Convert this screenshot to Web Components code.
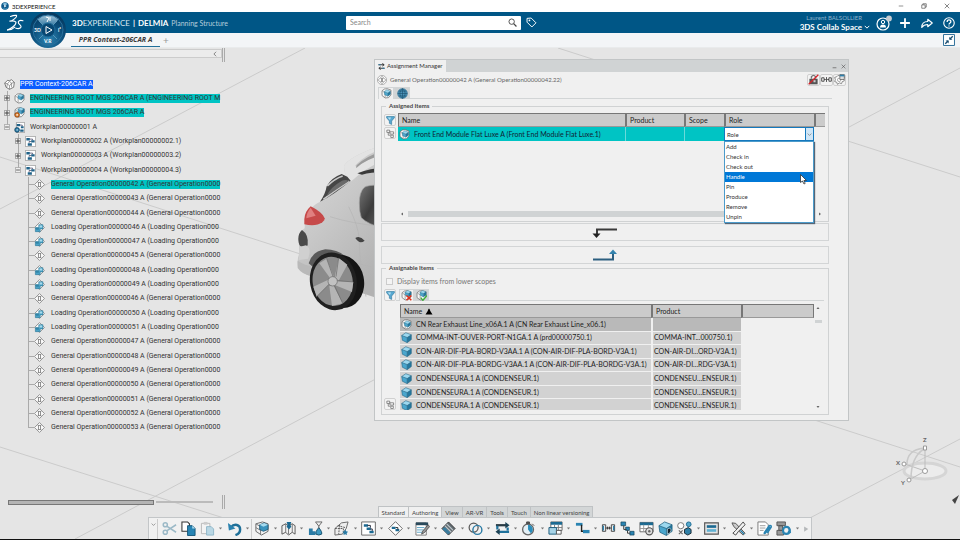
<!DOCTYPE html>
<html lang="en">
<head>
<meta charset="utf-8">
<title>3DEXPERIENCE</title>
<style>
html,body{margin:0;height:100%}
body{font:7px/9px Lato,"Open Sans",sans-serif;color:#2a2a2a;background:#e5e5e5}
</style>
</head>
<body>
<app-shell></app-shell>
<script>
const define=(name,html,setup)=>customElements.define(name,class extends HTMLElement{
  connectedCallback(){
    if(this.shadowRoot)return;
    const t=document.createElement('template');
    t.innerHTML='<style>*{box-sizing:border-box}button,input,select{font:inherit;color:inherit;margin:0;padding:0;border:0;background:none;border-radius:0}button{display:flex;align-items:center;justify-content:center}</style>'+(typeof html==='function'?html(this):html);
    this.attachShadow({mode:'open'}).append(t.content.cloneNode(true));
    if(setup)setup(this);
  }
});

/* ---------- icons, all on a 16 unit grid ---------- */
const cube=(x,y,s)=>`<g transform="translate(${x} ${y}) scale(${s})"><path d="M1 5 7 1l8 3-6 4z" fill="#9cd8ef"/><path d="M1 5l8 3v7.500L2 12z" fill="#4aa6cd"/><path d="M15 4 9 8v7.500l6-4.500z" fill="#24789f"/><path d="M1 5 7 1l8 3v7l-6 4.500L2 12zM1 5l8 3 6-4M9 8v7" fill="none" stroke="#1d5f7e" stroke-width=".8"/></g>`;
const product=`<path d="M5 1.500 1.500 4v7L6 14.500l5-.5 3.500-4V3L9 1z" fill="#f8f8f8" stroke="#666"/><path d="M2 4.500 6 7v7" fill="none" stroke="#888"/>`;
const ICONS={
part:cube(0,0,1),
product:product+cube(4,2,.65),
root:product+cube(5,1,.6)+'<path d="M2 2l2 2" stroke="#fff"/>',
mfg:product+cube(5,0,.66)+'<circle cx="4.500" cy="11.500" r="3.500" fill="#d97a2a" stroke="#7a3305"/><circle cx="4.500" cy="11.500" r="1.200" fill="#fff"/>',
ppr:'<path d="M5 2 1 6l2 6 5 3 6-3 1-7-4-4-3 1.500z" fill="#fff" stroke="#555" stroke-width="1.100"/><path d="M1 6l4 1 3-3.500L11 6l4-1M5 7l-1 5M11 6v6M5 7l3 3 3-4M8 10v5" fill="none" stroke="#777"/>',
wplan:'<path d="M.500.500h15v15H.500z" fill="#fff" stroke="#888"/><path d="M2 3h5v3.500H2zM9 6h5v3.500H9zM4 10.500h6V14H4z" fill="#1f6288"/><path d="M7 4.500h4V6M9 8H6v2" fill="none" stroke="#335"/>',
wplang:'<path d="M3.500.500h12v15h-12z" fill="#fff" stroke="#888"/><path d="M4 3h5v3H4zM10 6h4v3h-4zM9 11h5v3H9z" fill="#1f6288"/><path d="M9 4.500h3V6" fill="none" stroke="#335"/><circle cx="4.500" cy="11.500" r="3.500" fill="#2a7aa5" stroke="#093a57"/><circle cx="4.500" cy="11.500" r="1" fill="#fff"/>',
op:'<path d="M8 .800 15.200 8 8 15.200.800 8z" fill="#fcfcfc" stroke="#8a8a8a" stroke-width="1.300"/><path d="M5.500 5h5M5.500 11h5M6.500 5v6M9.500 5v6" fill="none" stroke="#777" stroke-width="1.200"/>',
load:'<path d="M8 .800 15.200 8 8 15.200.800 8z" fill="#fcfcfc" stroke="#8a8a8a" stroke-width="1.300"/><path d="M7 4h6v6H9v4H2V8h5z" fill="#4ba3c7" stroke="#23708f" stroke-width=".8"/><path d="M8 5h4v3H8z" fill="#a9dbec"/><path d="M3 9h4v2H3z" fill="#2b7d9f"/>',
opr:'<circle cx="8" cy="8" r="7.300" fill="#fff" stroke="#888"/><path d="M8 2l6 6-6 6-6-6z" fill="none" stroke="#777"/><path d="M6 5.500h4M6 10.500h4M6.500 6l3 4M9.500 6l-3 4" stroke="#555"/>',
plus:'<path d="M1 1h14v14H1z" fill="#eee" stroke="#888" stroke-width="2"/><path d="M8 2v12M2 8h12" stroke="#333" stroke-width="2.400"/>',
minus:'<path d="M1 1h14v14H1z" fill="#eee" stroke="#999" stroke-width="2"/><path d="M3 8h10" stroke="#555" stroke-width="2.400"/>',
filter:'<path d="M1 1h14v2l-5 6v6l-4-2V9L1 3z" fill="#58a9d2" stroke="#246c94"/><path d="M3 2.500h6L7 7z" fill="#b7e0f2"/>',
tree:'<path d="M1.500 2h5v4h-5zM7 5h6.500v4H7zM8.500 11H13v4H8.500zM4 6v5h3.500" fill="#fff" stroke="#666" stroke-width="1.300"/>',
globe:'<circle cx="8" cy="8" r="7" fill="#4b93b8" stroke="#24668a"/><path d="M1 8h14M8 1v14M2.500 4.500h11M2.500 11.500h11M8 1C3 5 3 11 8 15c5-4 5-10 0-14" fill="none" stroke="#1c516f" stroke-width=".9"/>',
compare:'<path d="M1 4h13M10 1l4 3-4 3M15 12H2M6 9l-4 3 4 3" fill="none" stroke="#333" stroke-width="2.200"/><path d="M1 4h5M15 12h-5" stroke="#2d7ea9" stroke-width="2.200"/>',
hidex:product+cube(5,0,.65)+'<path d="M8 8l7 7M15 8l-7 7" stroke="#e0301a" stroke-width="2.200"/>',
okx:product+cube(5,0,.65)+'<path d="M7 11l3 4 6-7" fill="none" stroke="#3fae3a" stroke-width="2"/>',
lock:'<path d="M2 7h12v8H2z" fill="#555"/><path d="M5 7V4q3-4 6 0v3" fill="none" stroke="#777" stroke-width="2"/><path d="M1 15 15 1" stroke="#d8232a" stroke-width="1.800"/><path d="M8 9h3v3H8z" fill="#ccc"/>',
nodes:'<path d="M1 5.500h3.500v5H1zM11.500 5.500H15v5h-3.500z" fill="none" stroke="#333" stroke-width="1.200"/><path d="M8 4.500v7M4.500 8H7M9 8h2.500" stroke="#333" stroke-width="1.200"/>',
gearw:'<path d="M6 2l2 1 2-2 2 2 3 1-1 3 1 3-3 1-1 3-3-1-3 2-1-3-3-1 1-3-1-3 3-1z" fill="#fff" stroke="#777" stroke-width="1.200"/><circle cx="7.500" cy="8.500" r="2.500" fill="none" stroke="#888"/><path d="M8.500 1H15v7H8.500z" fill="#ddd" stroke="#555"/><path d="M8.500 1H15v2.500H8.500z" fill="#2d7ea9"/>',
cut:'<g fill="none" stroke="#9bb9c7" stroke-width="1.600"><circle cx="3.500" cy="4" r="2.200"/><circle cx="3.500" cy="12" r="2.200"/><path d="M5 5.500 15 12M5 10.500 15 4"/></g>',
copy:'<path d="M1 1h6l2 2v8H1z" fill="#fff" stroke="#333" stroke-width="1.100"/><path d="M7 5h5l3 3v7.500H7z" fill="#2784b4" stroke="#14567a"/><path d="M12 5v3h3" fill="#b4deef"/>',
paste:'<path d="M1.500 2.500h9v11h-9z" fill="#f3f3f3" stroke="#b8b8b8"/><path d="M4 1h4v3H4z" fill="#ccc"/><path d="M7 6h5l2.500 2.500V15H7z" fill="#b9d7e4" stroke="#8fb6c9"/>',
undo:'<path d="M4 7C8 2 14 4 14 9c0 3-2 5-5 6" fill="none" stroke="#1f7099" stroke-width="2.600"/><path d="M1 2l1 8 7-2z" fill="#2a82af"/>',
box:'<path d="M2 3 9 1l6 2v8l-7 4-6-4z" fill="#f2f2f2" stroke="#666"/><path d="M2 3l5 3v9M2 7l5 3" fill="none" stroke="#777"/><path d="M6 4l5-2 4 2v5l-5 2-4-2z" fill="#3a93bd" stroke="#15506d" stroke-width=".8"/><path d="M6 4l4 2 5-2-4-2z" fill="#a5daee"/>',
map:'<path d="M1 5l4-2 3 2 4-2 3 2v9l-3-2-4 3-3-3-4 2z" fill="#f2f2f2" stroke="#555"/><path d="M5 3v9M8 6v8M12 3v9" stroke="#777"/><path d="M6 1h5l-1 3 1 2-2.500 3L6 6l1-2z" fill="#1c6a92"/>',
res:'<path d="M1 8h4v7H1zM5 11h3v4H5z" fill="#2a7ba5"/><path d="M11.500 7q4 5 3 7-3 2-6 0-1-2 3-7z" fill="#3f9ac2" stroke="#15506d"/><path d="M8 1h7l-3.500 4.500zM11.500 5v3" fill="#eee" stroke="#666"/>',
zone:'<path d="M1 8 8 2l7-1-2 7-4 6-8 1z" fill="#eee" stroke="#666"/><path d="M4 5l8 2M1 8h9v6M6 4l-1 10" stroke="#555" fill="none" stroke-dasharray="2 1"/><path d="M12 9l1 2 2 .5-1.500 1.500.5 2-2-1-2 1 .5-2L9 11.500l2-.5z" fill="#2a7ba5"/>',
wbox:'<path d="M.700 1h14.600v14H.700z" fill="#fff" stroke="#666"/><path d="M3 3.500h4.500v2.500H3zM6 7h4.500v2.500H6zM9 10.500h4.500v2.500H9z" fill="#1c6a92"/><path d="M7 4.700h3V7M10 8.500h2v2" fill="none" stroke="#223"/>',
diam:'<path d="M8 .700 15.300 8 8 15.300.700 8z" fill="#fff" stroke="#666"/><path d="M4 6h4v2.500H4zM8 8.500h4v2.500H8z" fill="#1c6a92"/><path d="M8 7h2.500v2" stroke="#222" fill="none"/>',
note:'<path d="M1 2h11v13H1z" fill="#fff" stroke="#777"/><path d="M1 1.500h13v3H1z" fill="#2a4a5c"/><path d="M2 7h8M2 9.500h7M2 12h6" stroke="#5aa3c4"/><path d="M14 4 8 11l-1 3 3-1.500L15.500 6z" fill="#999" stroke="#333" stroke-width=".7"/>',
diab:'<path d="M8 1l7 7-7 7-7-7z" fill="#616c72" stroke="#333"/><path d="M4 5l7 7M6 3l7 7" stroke="#c0c8cc" stroke-width="1.300"/><path d="M2 8l6 6M3.500 7l6 6" stroke="#2d84b0" stroke-width="1.200"/>',
rings:'<circle cx="6" cy="7" r="4.800" fill="none" stroke="#555" stroke-width="1.300"/><circle cx="10" cy="9.500" r="4.800" fill="none" stroke="#2a7ba5" stroke-width="1.500"/>',
swap:'<path d="M1 4.500h11" fill="none" stroke="#2a3b44" stroke-width="2.400"/><path d="M15 11.500H4M13.500 10V7M2.500 5v4" fill="none" stroke="#20729c" stroke-width="2.400"/><path d="M11 1l4.500 3.500L11 8zM5 8l-4.500 3.500L5 15z" fill="#1d4254"/>',
clock:'<circle cx="7.500" cy="9" r="5.800" fill="#e3eff5" stroke="#666" stroke-width="1.400"/><path d="M7.500 9V4a5 5 0 0 1 3 9z" fill="#2a8dbb"/><path d="M6 1h3v2H6zM12 3l2 2" fill="#555" stroke="#444"/>',
tabl:'<path d="M3 1h12v9H3z" fill="#fff" stroke="#666"/><path d="M3 1h12v3H3z" fill="#1c6a92"/><path d="M7 4v6M11 4v6M3 7h12" stroke="#777"/><path d="M1 7h8v7H1z" fill="#a7d3e6" stroke="#1c5c7d"/><path d="M9 10h5v4h-5z" fill="#fff" stroke="#555"/>',
step:'<path d="M1 2h7v3H1z" fill="#2a84b2"/><path d="M7 4v7h3" fill="none" stroke="#222" stroke-width="1.500"/><path d="M8.500 9.500h7v3.500h-7z" fill="#2a84b2"/>',
link2:'<path d="M1.500 4h3.500v7H1.500zM11 4h3.500v7H11z" fill="#eee" stroke="#444"/><path d="M2.500 5v5M13.500 5v5" stroke="#2a84b2" stroke-width="1.400"/><path d="M5 7.500h6M7 6v3M9 6v3" stroke="#333"/>',
chain:'<path d="M1 1h5v4H1zM6 6.500h4v3.500H6zM10.500 11H15v4h-4.500z" fill="#2a84b2" stroke="#123f56" stroke-width=".7"/><path d="M4 5v4h3M8 10v3h3" fill="none" stroke="#333"/>',
gtab:'<path d="M1 1.500h14v10H1z" fill="#fff" stroke="#666"/><path d="M1 1.500h14v3H1z" fill="#1c6a92"/><path d="M5 4v7M10 4v7M1 8h14" stroke="#999"/><circle cx="11" cy="11" r="3.800" fill="#ddd" stroke="#555" stroke-width="1.200"/><circle cx="11" cy="11" r="1.300" fill="#666"/>',
dcube:cube(0,0,1)+'<path d="M10 8.500v5.500l3-1.500 1-3-1.500-2z" fill="#10202a" stroke="#cfe9f4" stroke-width=".7"/>',
shapes:'<circle cx="4" cy="5" r="3.300" fill="#fff" stroke="#777"/><circle cx="12.500" cy="3.500" r="2.500" fill="#57a9cc" stroke="#1c6a92"/><path d="M2 10l4 4M6 10l-4 4" stroke="#666" stroke-width="1.200"/><path d="M8 9l4-2 3 2v4l-3.500 2L8 13z" fill="#2f7fa6" stroke="#1b2a33"/>',
panel:'<path d="M.700 2h14.600v12H.700z" fill="#e4e4e4" stroke="#555" stroke-width="1.200"/><path d="M3 4.500h10v2.800H3z" fill="#1c6a92"/><path d="M3 8.700h10v2.800H3z" fill="#60b1d2"/>',
tools:'<path d="M1 2l4 .5L15 13l-2 2L3 6z" fill="#ccc" stroke="#555"/><path d="M13 1l2 3-7 7-3 4-3-2 3-3z" fill="#f2f2f2" stroke="#444"/><path d="M10 10l4 4" stroke="#1c7aa8" stroke-width="1.500"/>',
clip:'<path d="M1 1h8l3 3v11H1z" fill="#fff" stroke="#777"/><path d="M3 5h6M3 7.500h6M3 10h4" stroke="#999"/><path d="M14 6l-5 7q-2 1-1-1l5-7q3-1 2 2l-4 6" fill="none" stroke="#2a84b2" stroke-width="1.500"/>',
sync:'<path d="M1 1h9v4H1zM3 5h4v5H3zM1 10h7v5H1z" fill="#999" stroke="#555"/><path d="M7.500 10c0-5 7-5 7 0 0 5-7 5-7 0" fill="none" stroke="#2a84b2" stroke-width="2.200"/><path d="M12 12l3.500-4 .5 5z" fill="#2a84b2"/>',
dd:'<path d="M3 5h10l-5 6z" fill="#777"/>',
chev:'<path d="M2 5l6 6 6-6" fill="none" stroke="#777" stroke-width="2.200"/>',
chevw:'<path d="M2 5l6 6 6-6" fill="none" stroke="#fff" stroke-width="2.600"/>',
left:'<path d="M12 2 4 8l8 6z" fill="#666"/>',
right:'<path d="M4 2l8 6-8 6z" fill="#666"/>',
rlight:'<path d="M3 1l11 7-11 7z" fill="#b5b8ba"/>',
up:'<path d="M2 12 8 4l6 8z" fill="#666"/>',
down:'<path d="M2 4l6 8 6-8z" fill="#666"/>',
sort:'<path d="M0 15 5 7q3-12 6 0l5 8z" fill="#000"/>',
chevl:'<path d="M11 2 5 8l6 6" fill="none" stroke="#666" stroke-width="2"/>',
user:'<circle cx="7" cy="9" r="6" fill="none" stroke="#fff" stroke-width="1.200"/><circle cx="7" cy="7" r="1.700" fill="none" stroke="#fff"/><path d="M4 12.500q0-3 3-3t3 3z" fill="#fff"/><circle cx="13" cy="3.500" r="2.900" fill="#c6cdd2"/>',
add:'<path d="M8 1.500v13M1.500 8h13" stroke="#fff" stroke-width="2.400"/>',
share:'<path d="M9 3l6 5-6 5v-3C5 10 3 11 1 14 1 9 4 6 9 6z" fill="none" stroke="#fff" stroke-width="1.500" stroke-linejoin="round"/>',
help:'<circle cx="8" cy="8" r="7" fill="none" stroke="#fff" stroke-width="1.500"/><path d="M5.500 6.500C5.500 3 10.500 3 10.500 6.300 10.500 8 8 8 8 10M8 11.300v1.500" fill="none" stroke="#fff" stroke-width="1.700"/>',
mag:'<circle cx="6.500" cy="6.500" r="4.800" fill="none" stroke="#444" stroke-width="1.600"/><path d="M10 10l5 5" stroke="#444" stroke-width="2.200"/>',
tag:'<path d="M1.500 2v5.500l7 7 6-6-7-7z" fill="none" stroke="#fff" stroke-width="1.400"/><circle cx="5" cy="5" r="1.300" fill="#fff"/>',
shrink:'<path d="M.700.700h14.600v14.600H.700z" fill="#fff" stroke="#2d6e99" stroke-width="1.300"/><path d="M3 13l4-4M13 3 9 7" stroke="#174c70" stroke-width="1.800"/><path d="M3.500 8.500h4v4zM8.500 7.500v-4l4 4z" fill="#174c70"/>',
min:'<path d="M2 8h12" stroke="#333" stroke-width="1.400"/>',
minb:'<path d="M2 12h12" stroke="#777" stroke-width="3"/>',
rest:'<path d="M2 5h9v9H2zM5 5V2h9v9h-3" fill="none" stroke="#333" stroke-width="1.500"/>',
x:'<path d="M2 2l12 12M14 2 2 14" stroke="#444" stroke-width="1.700"/>',
logo3d:'<circle cx="8" cy="8" r="7.600" fill="#0f5a8c"/><path d="M3 4q5-4 10 0l-5 3z" fill="#8cc3e0"/><path d="M6.500 5.500 11 8l-4.500 3z" fill="#fff"/><path d="M3 12q5 4 10 0" stroke="#4a9cc6" stroke-width="1.500" fill="none"/>'
};
define('ds-icon',el=>`<style>:host{display:block;flex:none;width:11px;height:11px}svg{display:block;width:100%;height:100%}</style><svg viewBox="0 0 16 16" aria-hidden="true">${ICONS[el.getAttribute('name')]||''}</svg>`);

/* ---------- window title ---------- */
define('app-title',`<style>
:host{display:flex;align-items:center;height:12px;background:#fff;padding:0 10px 0 1px;flex:none;font-size:6px}
.name{margin-left:3px;flex:1;color:#111}
.win{display:flex;gap:17px}.win ds-icon{width:6px;height:6px}ds-icon{width:8px;height:8px}
</style><ds-icon name="logo3d"></ds-icon><span class="name">3DEXPERIENCE</span>
<div class="win"><button aria-label="Minimize"><ds-icon name="min"></ds-icon></button><button aria-label="Restore"><ds-icon name="rest"></ds-icon></button><button aria-label="Close"><ds-icon name="x"></ds-icon></button></div>`);

/* ---------- blue bar ---------- */
define('ds-logo',`<style>:host{display:block;width:17px;height:17px}svg{display:block}</style>
<svg width="17" height="17" viewBox="0 0 48 48" fill="none" stroke="#fff" stroke-width="3.200" stroke-linecap="round" stroke-linejoin="round" aria-hidden="true"><path d="M10 7q9-4 17-3 2 4-13 15"/><path d="M8 20q14-2 17 3 2 5-8 13-7 6-16 9"/><path d="M2 45q12 0 20-8"/><path d="M45 19q-10-3-13 3-1 4 4 8 6 5 2 9-5 4-13 1"/></svg>`);
define('ds-compass',`<style>:host{display:block;width:36px;height:36px}svg{display:block}text{font:bold 5px Lato,sans-serif;fill:#fff}</style>
<svg width="36" height="36" viewBox="0 0 36 36" role="img" aria-label="Compass"><defs><radialGradient id="g" cx=".5" cy=".75" r=".7"><stop offset="0" stop-color="#2f86b4"/><stop offset=".6" stop-color="#0b4f7c"/><stop offset="1" stop-color="#063a60"/></radialGradient><linearGradient id="t" x2="0" y2="1"><stop offset="0" stop-color="#a3c6da"/><stop offset="1" stop-color="#3c7da5"/></linearGradient></defs>
<circle cx="18" cy="18" r="18" fill="url(#g)"/><path d="M7 7q11-8 22 0l-6 6q-5-4-10 0z" fill="url(#t)"/><circle cx="18" cy="18" r="15" fill="none" stroke="#2a709d"/><path d="M9 9l5 5M27 9l-5 5M9 27l5-5M27 27l-5-5" stroke="#6fa9c9" stroke-width=".7"/><circle cx="18" cy="18" r="7" fill="#084772" stroke="#1f6d9c"/><path d="M16 14.500v7l6-3.500z" fill="none" stroke="#fff"/><text x="4" y="20">3D</text><text x="28" y="20">i²</text><text x="14" y="31">V.R</text><path d="M16 5l3 1-2 4M20 5v4" stroke="#fff" fill="none"/></svg>`);
define('app-header',`<style>
:host{display:flex;align-items:center;height:21px;background:#005686;color:#fff;position:relative;flex:none;padding:0 5px 0 7px}
ds-compass{position:absolute;left:30px;top:0;z-index:2}
.brand{margin-left:48px;font-size:8px;line-height:12px;color:#dce8f0;white-space:nowrap;display:flex;align-items:center;gap:3px;flex:0 0 274px}
.brand b{color:#fff}.brand small{font-size:7px;color:#b6cddc}
form{display:flex;align-items:center;margin:0;gap:5px}
.box{display:flex;align-items:center;background:#fff;color:#444;width:175px;height:14px;border-radius:1px}
.box input{flex:1;min-width:0;padding-left:4px;font-size:7px}.box input::placeholder{color:#888;opacity:1}
.box button{width:18px;height:14px;border-radius:1px}.box ds-icon{width:9px;height:9px}
.right{flex:1;display:flex;justify-content:flex-end;align-items:center;gap:10px}
.who{display:flex;flex-direction:column;align-items:flex-end}
.who small{font-size:6px;line-height:8px;color:#8fb4cc;padding-right:8px}
.who button{font-weight:bold;font-size:8px;line-height:10px;gap:2px}.who ds-icon{width:6px;height:6px}
.right>button ds-icon{width:12px;height:12px}
.right>button:first-of-type ds-icon{width:16px;height:16px}.right>button:first-of-type{margin:0 -3px 0 -4px}
</style><ds-logo></ds-logo><ds-compass></ds-compass>
<div class="brand"><span><b>3D</b>EXPERIENCE</span><b>|</b><b>DELMIA</b><small>Planning Structure</small></div>
<form role="search"><div class="box"><input type="search" aria-label="Search" placeholder="Search"><button type="button" aria-label="Run search"><ds-icon name="mag"></ds-icon></button></div><button type="button" aria-label="Tags"><ds-icon name="tag"></ds-icon></button></form>
<div class="right"><div class="who"><small>Laurent BALSOLLIER</small><button>3DS Collab Space<ds-icon name="chevw"></ds-icon></button></div>
<button aria-label="Profile"><ds-icon name="user"></ds-icon></button><button aria-label="Add"><ds-icon name="add"></ds-icon></button><button aria-label="Share"><ds-icon name="share"></ds-icon></button><button aria-label="Help"><ds-icon name="help"></ds-icon></button></div>`);

define('app-tabs',`<style>
:host{display:flex;align-items:stretch;height:15px;background:#f3f5f7;border-bottom:1px solid #e9ebec;flex:none;padding:0 5px 0 71px}
.tab{font:italic bold 7px/13px "Open Sans",sans-serif;color:#3b3b3b;padding:0 5px;border-bottom:1px solid #1f6e99;min-width:89px}
.new{width:12px;color:#999;font-size:10px}.sp{flex:1}.shrink ds-icon{width:12px;height:12px}
</style><button class="tab">PPR Context-206CAR A</button><button class="new" aria-label="New tab">+</button><span class="sp"></span><button class="shrink" aria-label="Exit full view"><ds-icon name="shrink"></ds-icon></button>`);

/* ---------- 3D scene ---------- */
define('scene-view',`<style>:host{display:block;overflow:hidden}svg{display:block;width:100%;height:100%}text{font:bold 6px Lato,sans-serif;fill:#666}</style>
<svg viewBox="0 48 960 491" preserveAspectRatio="xMinYMin slice" role="img" aria-label="Car in 3D scene">
<defs><linearGradient id="b" x1="0" y1="0" x2=".6" y2="1"><stop offset="0" stop-color="#dadada"/><stop offset=".5" stop-color="#c8c8c8"/><stop offset="1" stop-color="#b2b2b2"/></linearGradient><linearGradient id="w" x2="1" y2="1"><stop offset="0" stop-color="#777"/><stop offset=".5" stop-color="#3c3c3c"/><stop offset="1" stop-color="#666"/></linearGradient></defs>
<g stroke="#cbcbcb" fill="none"><path d="M305 48 0 209M0 157l960 310M0 447l290 92M75 539 960 68M770 539l190-100M558 48l402 129"/></g>
<g transform="translate(280 50) scale(.3333)">
<path d="M310 285C250 303 195 332 192 350q0 26 20 42l-92 63q-24 12-34 30-12 20-12 50-18 10-18 30l2 45q-8 20-4 42 14 20 42 28l220 72z" fill="url(#b)"/>
<path d="M310 285C250 303 195 332 192 350q0 30 22 44 40-40 96-62v-20q-50 10-80 42l-4-8q36-38 84-50z" fill="#e3e3e3"/>
<path d="M230 346q32-30 80-42v10q-50 12-82 40z" fill="#9b9b9b"/>
<path d="M232 370q40-16 80-16v12q-40 0-66 8z" fill="#3a3a3a"/>
<path d="M120 455q16-22 20-46 14-26 45-37l17 8 10 12q-50 42-92 63z" fill="#454545"/><path d="M130 448q40-30 78-54M142 408q22-22 46-30" stroke="#c9c9c9" stroke-width="5" fill="none"/><path d="M186 392q14-4 20 2l-66 44q10-26 46-46z" fill="#6a6a6a"/>
<path d="M310 405q-50-1-58 8-14 14-14 46 0 28 6 44 20 20 66 32z" fill="url(#w)" stroke="#9e9e9e" stroke-width="2"/>
<path d="M92 469q-18 16-19 38v16q34 8 54-6 8-6 7-12-6-18-42-36z" fill="#c64a4a"/><path d="M92 473q-12 14-13 32l28-8z" fill="#e08080"/>
<path d="M66 540q-11 10-11 26t6 22q14 8 22-2 4-32-17-46z" fill="#4a4a4a"/>
<path d="M60 590l18-4q18 10 6 40l-28 4z" fill="#d0d0d0"/><path d="M53 632q22 14 40 16v30q-28-6-40-24z" fill="#b9b9b9"/>
<path d="M86 640q10-36 50-42 60 0 90 60l16 80-20 20z" fill="#5a5a5a"/>
<path d="M206 470q30 60 32 100 0 70 20 170M150 500q60 20 160 30M232 640l78 20" stroke="#b4b4b4" stroke-width="2" fill="none"/>
<path d="M226 564q14-8 28 8-16 12-28-8z" fill="#444"/>
<ellipse cx="186" cy="694" rx="66" ry="80" fill="#151515" transform="rotate(-12 186 694)"/>
<ellipse cx="160" cy="694" rx="70" ry="87" fill="#202020" transform="rotate(-10 160 694)"/>
<ellipse cx="158" cy="694" rx="60" ry="74" fill="#8b8b8b" transform="rotate(-10 158 694)"/>
<g fill="#b5b5b5"><path d="M150 684 118 640l22-14 24 60zM164 682l12-58 26 20-26 48zM172 694l48 2-4 30-50-20zM160 706l28 54-32 8-8-60zM150 700l-40 40-10-30 48-22z"/></g><g stroke="#666" stroke-width="2" fill="none"><path d="M140 626l20 56M176 624l-8 56M220 696l-46-4M188 760l-24-52M110 740l40-40"/></g><circle cx="158" cy="694" r="14" fill="#c2c2c2" stroke="#666" stroke-width="2"/>
</g>
<ellipse cx="925" cy="471" rx="21" ry="8" fill="#ececec" stroke="#d5d5d5" stroke-width="3"/>
<g fill="none" stroke="#bdbdbd"><path d="M925 471v-24M925 471l-20-7M925 471l-16 9"/><path d="M907 464q0-14 17-16M911 479q0-22 13-30" stroke="#c9c9c9" stroke-width="1.500"/></g>
<g fill="#fff" stroke="#999"><path d="M923.500 446h3v4h-3z"/><circle cx="904" cy="464" r="2"/><circle cx="909" cy="480" r="2"/><circle cx="925" cy="471" r="2.500"/></g>
<text x="923" y="442">Z</text><text x="896" y="465">X</text><text x="901" y="485">Y</text>
<path d="M959 495l-7 5 3 4z" fill="#444"/>
</svg>`);

/* ---------- tree ---------- */
define('tree-row',el=>`<style>
:host{display:flex;align-items:center;min-height:10px;overflow:hidden;color:#333;white-space:nowrap;background-repeat:no-repeat}
.ex{width:6px;height:6px;flex:none;margin-right:4px}.ex ds-icon{width:6px;height:6px}
span{margin-left:6px;line-height:9px;flex:none}
:host([level="0"]){padding-left:4px}:host([level="0"]) span{margin-left:5px}
:host([level="1"]){padding-left:4px;background-image:linear-gradient(#aaa,#aaa);background-size:1px 100%;background-position:7px 0}
:host([level="1"]) span,:host([level="2"]) span{margin-left:5px}
:host([level="2"]){padding-left:15px;background-image:linear-gradient(#aaa,#aaa);background-size:1px 100%;background-position:18px 0}
:host([level="3"]){padding-left:34px;background-image:linear-gradient(#aaa,#aaa),linear-gradient(#aaa,#aaa);background-size:1px 100%,6px 1px;background-position:28px 0,28px 50%}
:host([last]){background-size:1px 50%,6px 1px}
:host([mark=cyan]) span{background:#00c4c4}:host([mark=blue]) span{background:#0a5cff;color:#fff}
</style>${el.hasAttribute('ex')?`<button class="ex" aria-label="Expand or collapse"><ds-icon name="${el.getAttribute('ex')}"></ds-icon></button>`:''}<ds-icon name="${el.getAttribute('icon')}"></ds-icon><span><slot></slot></span>`);
const ops=[['G',42],['G',43],['G',44],['L',46],['L',47],['G',45],['L',48],['L',49],['G',46],['L',50],['L',51],['G',47],['G',48],['G',49],['G',50],['G',51],['G',52],['G',53]];
define('tree-panel',`<style>
:host{display:grid;grid-template-columns:222px 3px;grid-template-rows:14px 1fr 14px;position:relative;font-family:Roboto,sans-serif}
.top{margin:1px 0 4px;border:1px solid #ccc;border-left:0;display:flex;justify-content:flex-end;padding-right:3px;background:#ececec}.top ds-icon{width:6px;height:6px}
.tree{grid-row:2;display:grid;grid-auto-rows:minmax(10px,1fr);padding:15px 0 60px;min-width:0;overflow:hidden}
.grip{width:3px;height:14px;border:solid #aaa;border-width:0 1px;grid-column:2}
.sb{display:flex;align-items:center;padding:0 9px 0 8px;gap:2px}.sb i{flex:145;height:5px;background:#b4b4b4;border:1px solid #777}.sb b{flex:58;height:2px;background:#bbb}
tree-row{min-width:0}
</style><div class="top"><button aria-label="Collapse panel"><ds-icon name="chevl"></ds-icon></button></div><i class="grip"></i>
<div class="tree">
<tree-row level="0" icon="ppr" mark="blue">PPR Context-206CAR A</tree-row>
<tree-row level="1" ex="plus" icon="root" mark="cyan">ENGINEERING ROOT MGS 206CAR A (ENGINEERING ROOT M</tree-row>
<tree-row level="1" ex="plus" icon="mfg" mark="cyan">ENGINEERING ROOT MGS 206CAR A</tree-row>
<tree-row level="1" last ex="minus" icon="wplang">Workplan00000001 A</tree-row>
<tree-row level="2" ex="plus" icon="wplan">Workplan00000002 A (Workplan00000002.1)</tree-row>
<tree-row level="2" ex="plus" icon="wplan">Workplan00000003 A (Workplan00000003.2)</tree-row>
<tree-row level="2" last ex="minus" icon="wplan">Workplan00000004 A (Workplan00000004.3)</tree-row>
${ops.map(([k,n],i)=>{const w=k==='G'?'General':'Loading';return `<tree-row level="3" icon="${k==='G'?'op':'load'}"${i===0?' mark="cyan"':''}${i===17?' last':''}>${w} Operation000000${n} A (${w} Operation000${k==='G'?'0':''}</tree-row>`}).join('')}
</div><div class="sb" style="grid-row:3;grid-column:1"><i></i><b></b></div><i class="grip" style="grid-row:3"></i>`);

/* ---------- role drop-down ---------- */
define('role-select',`<style>
:host{display:block;position:relative;height:14px;color:#333;margin-left:-1px}
select{appearance:none;width:100%;height:14px;border:1px solid #1478bd;background:#fff;padding-left:2px;font-size:6px}
.arrow{position:absolute;right:0;top:0;width:9px;height:14px;background:#cfe6f7;border:1px solid #1478bd;display:flex;align-items:center;justify-content:center;pointer-events:none}.arrow ds-icon{width:5px;height:5px}
ul{position:absolute;left:0;top:14px;width:100%;margin:0;padding:0;list-style:none;background:#fff;border:1px solid #4c9bcb;box-shadow:1px 1px 1px #567;z-index:3;font-size:6px}
li{height:10px;line-height:10px;padding-left:1px}li[aria-selected=true]{background:#0078d7;color:#fff}
svg{position:absolute;left:76px;top:47px;z-index:4}
</style><select aria-label="Role"><option>Role</option></select><span class="arrow"><ds-icon name="chev"></ds-icon></span>
<ul role="listbox" aria-label="Roles">${['Add','Check in','Check out','Handle','Pin','Produce','Remove','Unpin'].map(r=>`<li role="option" aria-selected="${r==='Handle'}">${r}</li>`).join('')}</ul>
<svg width="7" height="11" viewBox="0 0 7 11" aria-hidden="true"><path d="M.500.500v8l2-1.500 1.500 3 1.200-.6-1.300-2.900H6.500z" fill="#fff" stroke="#333" stroke-width=".8"/></svg>`);

/* ---------- group box ---------- */
define('group-box',el=>`<style>
:host{display:block}fieldset{margin:0;border:1px solid #d0d2d3;padding:0 2px 4px;min-width:0}
legend{font-size:6px;line-height:8px;font-weight:bold;padding:0 3px;margin-left:2px;color:#444}
</style><fieldset><legend>${el.getAttribute('label')}</legend><slot></slot></fieldset>`);

/* ---------- floating window ---------- */
const tableCss=`table{border-collapse:separate;border-spacing:0;table-layout:fixed;width:100%}
th{background:#cbcbcb;border:solid #777;border-width:1px 0 1px 1px;border-bottom-color:#999;text-align:left;font-weight:normal;height:14px;padding:0 3px;color:#222}
th+th{border-left-width:2px}td{padding:0 3px;white-space:nowrap}.cell{display:flex;align-items:center;gap:4px}.cell ds-icon{margin-left:-2px}`;
const items=[['product','CN Rear Exhaust Line_x06A.1 A (CN Rear Exhaust Line_x06.1)',''],['part','COMMA-INT-OUVER-PORT-N1GA.1 A (prd00000750.1)','COMMA-INT...000750.1)'],['part','CON-AIR-DIF-PLA-BORD-V3AA.1 A (CON-AIR-DIF-PLA-BORD-V3A.1)','CON-AIR-DI...ORD-V3A.1)'],['part','CON-AIR-DIF-PLA-BORDG-V3AA.1 A (CON-AIR-DIF-PLA-BORDG-V3A.1)','CON-AIR-DI...RDG-V3A.1)'],['part','CONDENSEURA.1 A (CONDENSEUR.1)','CONDENSEU...ENSEUR.1)'],['part','CONDENSEURA.1 A (CONDENSEUR.1)','CONDENSEU...ENSEUR.1)'],['part','CONDENSEURA.1 A (CONDENSEUR.1)','CONDENSEU...ENSEUR.1)']];
define('assignment-manager',`<style>${tableCss}
:host{display:block;background:#f0f0f0;border:1px solid #c2c5c6}
.bar{display:flex;align-items:stretch;height:12px;background:#d0d3d4}
.bar h2{margin:0;background:#f0f0f0;font:6px/12px Lato,sans-serif;color:#333;display:flex;align-items:center;gap:2px;padding:0 4px 0 3px}.bar h2 ds-icon{width:7px;height:7px}
.bar div{flex:1;display:flex;justify-content:flex-end;align-items:center;gap:4px;padding-right:2px}.bar div ds-icon{width:5px;height:5px}
.op{display:flex;align-items:center;gap:2px;height:15px;padding:0 2px;color:#666;font-size:6px}.op span{flex:1;padding-left:1px}
.op button,.tool{width:13px;height:12px;background:#f3f3f3;border:1px solid #d0d0d0;border-radius:2px;flex:none}
.op>ds-icon{width:10px;height:10px}.op button{margin-left:-2px}.op button ds-icon{width:11px;height:11px}
.tabs{display:flex;height:12px;margin:0 16px 3px 3px}
.tabs button{width:16px;border:1px solid #d2d5d6;border-bottom:0}.tabs .off{background:#d0d3d4}.tabs i{flex:1;border-bottom:1px solid #d2d5d6}
.body{padding:0 19px 5px 6px}
.grid{display:grid;grid-template-columns:12px 1fr;column-gap:2px;padding:3px 1px 0 0}
.side{display:flex;flex-direction:column;gap:1px}.tool ds-icon{width:9px;height:9px}
.first .side{padding-top:1px}
.space{height:98px}
.t1 td{background:#00c4c4;height:14px;border-left:1px solid #6adada;color:#123}.t1 td:first-child{border-left:0}.t1 td:last-child{background:none;border:0}
.t1 td.role{padding:0}
.hs{display:flex;align-items:center;justify-content:space-between;gap:4px;padding:0 3px 0 2px;height:6px}.hs i{flex:1;height:6px;background:#d0d3d4}.hs ds-icon{width:4px;height:4px}
.move{display:flex;width:100%;height:18px;border:1px solid #d3d5d6;margin-top:1px}.move+.move{margin-top:5px}
label{display:flex;align-items:center;gap:4px;color:#777;height:10px;padding:0 2px;margin-top:4px}
input{appearance:none;width:7px;height:7px;border:1px solid #ccc;background:#f4f4f4}
.sub{display:flex;height:12px;margin:3px 2px 3px 0}.sub .tabb{width:15px;border:1px solid #d2d5d6;border-bottom:0}.sub .off{background:#d0d3d4}.sub i{flex:1;border-bottom:1px solid #d2d5d6}
.lower{display:grid;grid-template-columns:16px 1fr 12px;height:106px}
.lower .side{justify-content:flex-end}
.clip{overflow:hidden;height:106px}
.t2{height:109px}.t2 th{border-right:0}.t2 th:last-child{border-right:1px solid #777}
.t2 td{background:#d2d2d2;border-bottom:1px solid #f0f0f0;color:#222}.t2 td+td{border-left:2px solid #f0f0f0;padding-left:1px}.t2 tr:first-child td{background:#b9b9b9}.t2 td.none,.t2 tr:first-child td.none{background:none}
.th{display:flex;align-items:center;gap:3px}.th ds-icon{width:8px;height:7px}
.vs{display:flex;flex-direction:column;align-items:center;padding:2px 4px 1px 0}.vs ds-icon{width:4px;height:4px}.vs i{width:7px;height:3px;background:#d0d3d4;margin-top:10px}.vs b{flex:1}
.tool{width:12px}
</style>
<div class="bar"><h2><ds-icon name="compare"></ds-icon>Assignment Manager</h2><div><button aria-label="Minimize"><ds-icon name="minb"></ds-icon></button><button aria-label="Close"><ds-icon name="x"></ds-icon></button></div></div>
<div class="op"><ds-icon name="opr"></ds-icon><span>General Operation00000042 A (General Operation00000042.22)</span><button aria-label="Lock"><ds-icon name="lock"></ds-icon></button><button aria-label="Links"><ds-icon name="nodes"></ds-icon></button><button aria-label="Settings"><ds-icon name="gearw"></ds-icon></button></div>
<div class="tabs"><button aria-label="Items"><ds-icon name="product"></ds-icon></button><button class="off" aria-label="Global"><ds-icon name="globe"></ds-icon></button><i></i></div>
<div class="body">
<group-box label="Assigned Items"><div class="grid first"><div class="side"><button class="tool" aria-label="Filter"><ds-icon name="filter"></ds-icon></button><button class="tool" aria-label="Show tree"><ds-icon name="tree"></ds-icon></button></div>
<div><div class="space"><table class="t1"><colgroup><col><col style="width:59px"><col style="width:40px"><col style="width:90px"><col style="width:11px"></colgroup><thead><tr><th>Name</th><th>Product</th><th>Scope</th><th>Role</th><th></th></tr></thead><tbody><tr><td><span class="cell"><ds-icon name="product"></ds-icon>Front End Module Flat Luxe A (Front End Module Flat Luxe.1)</span></td><td></td><td></td><td class="role"><role-select></role-select></td><td></td></tr></tbody></table></div>
<div class="hs"><ds-icon name="left"></ds-icon><i></i><ds-icon name="right"></ds-icon></div></div></div></group-box>
<button class="move" aria-label="Assign"><svg width="26" height="14" viewBox="0 0 26 14"><path d="M25 4.500H5V10" fill="none" stroke="#3a3a3a" stroke-width="2"/><path d="M.500 8.500h8L4.500 13z" fill="#222"/></svg></button>
<button class="move" aria-label="Unassign"><svg width="26" height="14" viewBox="0 0 26 14"><path d="M1 11.500h20V5" fill="none" stroke="#2c5f80" stroke-width="2"/><path d="M17 6h8l-4-4.500z" fill="#3382ad"/></svg></button>
<group-box label="Assignable Items"><label><input type="checkbox">Display items from lower scopes</label>
<div class="sub"><button class="tool" aria-label="Filter"><ds-icon name="filter"></ds-icon></button><i style="flex:0 0 3px"></i><button class="tabb" aria-label="Exclude"><ds-icon name="hidex"></ds-icon></button><button class="tabb off" aria-label="Include"><ds-icon name="okx"></ds-icon></button><i></i></div>
<div class="lower"><div class="side"><button class="tool" aria-label="Show tree"><ds-icon name="tree"></ds-icon></button></div>
<div class="clip"><table class="t2"><colgroup><col><col style="width:90px"><col style="width:73px"></colgroup><thead><tr><th><span class="th">Name<ds-icon name="sort"></ds-icon></span></th><th>Product</th><th></th></tr></thead><tbody>${items.map(([i,n,p])=>`<tr><td><span class="cell"><ds-icon name="${i}"></ds-icon>${n}</span></td><td>${p}</td><td class="none"></td></tr>`).join('')}</tbody></table></div>
<div class="vs"><ds-icon name="up"></ds-icon><i></i><b></b><ds-icon name="down"></ds-icon></div></div></group-box>
</div>`);

/* ---------- action bar ---------- */
const acts='cut copy paste+ undo+ | box+ map+ res+ zone+ wbox+ diam+ note+ diab+ rings+ swap+ clock+ tabl+ step+ link2 chain gtab dcube shapes+ panel+ tools+ clip sync+'.split(' ');
define('action-bar',`<style>
:host{display:flex;flex-direction:column}
nav{display:flex;align-self:center;margin-left:11px}
nav button{height:11px;padding:0 3px;background:#d3d6d7;border:1px solid #bfc2c4;border-bottom:0;border-left-width:0;font-size:6px;color:#444}nav button.on{background:#f0f0f0}
nav button:first-child{border-left:1px solid #bfc2c4}
.bar{display:flex;align-items:center;height:22px;background:#f1f1f1;border:1px solid #c3c6c8;border-bottom:0}
.a{width:19px;height:20px;flex:none}.a ds-icon{width:15px;height:15px}
.d{flex:1;height:20px;min-width:4px}.d ds-icon{width:5px;height:5px}
.c{width:9px;height:20px;border-right:1px solid #ccc;align-items:flex-start;padding-top:3px;margin-right:2px}.c ds-icon{width:5px;height:5px}
.s{width:1px;height:20px;background:#ccc}.e{width:10px;height:20px}.e ds-icon{width:6px;height:6px}
</style><nav aria-label="Sections">${['Standard','Authoring','View','AR-VR','Tools','Touch','Non linear versioning'].map((t,i)=>`<button class="${i<2?'on':''}">${t}</button>`).join('')}</nav>
<div class="bar"><button class="c" aria-label="More"><ds-icon name="chev"></ds-icon></button>${acts.map(a=>a==='|'?'<i class="s"></i>':`<button class="a" aria-label="${a.replace('+','')}"><ds-icon name="${a.replace('+','')}"></ds-icon></button>${a.endsWith('+')?'<button class="d" aria-label="Options"><ds-icon name="dd"></ds-icon></button>':''}`).join('')}<button class="e" aria-label="Next"><ds-icon name="rlight"></ds-icon></button></div>`);

define('app-shell',`<style>
:host{display:flex;flex-direction:column;height:100vh;border-bottom:1px solid #111;overflow:hidden}
*,:host{box-sizing:border-box}
main{flex:1;position:relative;display:flex;min-height:0}
scene-view{position:absolute;inset:0}
tree-panel{align-self:stretch;margin-bottom:30px}
assignment-manager{position:absolute;left:374px;right:111px;top:11px}
action-bar{position:absolute;left:148px;right:148px;bottom:0}
</style><app-title></app-title><app-header></app-header><app-tabs></app-tabs>
<main><scene-view></scene-view><tree-panel></tree-panel><assignment-manager></assignment-manager><action-bar></action-bar></main>`);
</script>
</body>
</html>
